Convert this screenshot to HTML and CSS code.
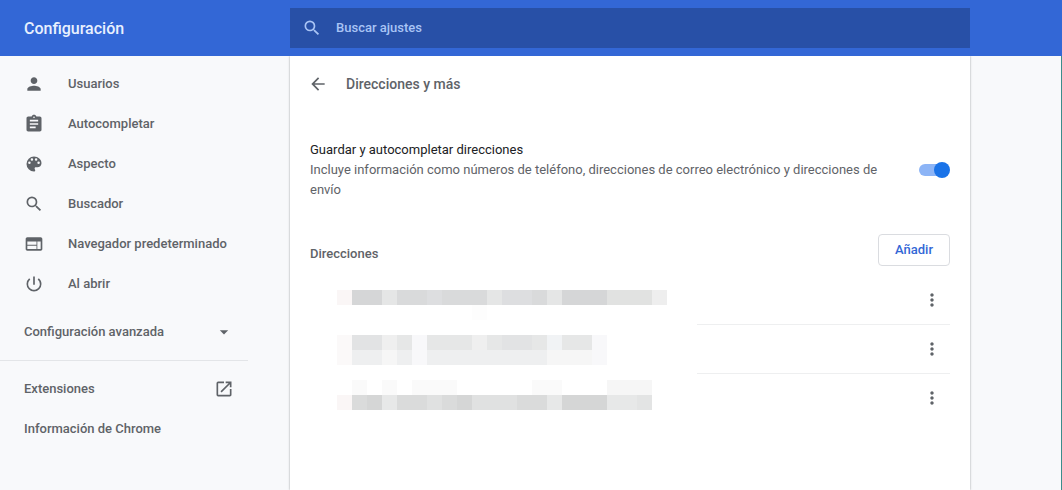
FILE: index.html
```html
<!DOCTYPE html>
<html lang="es">
<head>
    <meta charset="UTF-8">
    <meta name="viewport" content="width=device-width, initial-scale=1.0">
    <title>Configuración - Direcciones y más</title>
    <link rel="stylesheet" href="styles.css">
</head>
<body>

<header class="toolbar">
    <h1>Configuración</h1>
    <label class="search">
        <svg class="icon" viewBox="0 0 24 24" aria-hidden="true"><path d="M15.5 14h-.79l-.28-.27A6.47 6.47 0 0 0 16 9.5 6.5 6.5 0 1 0 9.5 16c1.61 0 3.09-.59 4.23-1.57l.27.28v.79l5 4.99L20.49 19l-4.99-5zm-6 0C7.01 14 5 11.99 5 9.5S7.01 5 9.5 5 14 7.01 14 9.5 11.99 14 9.5 14z"/></svg>
        <input type="search" placeholder="Buscar ajustes" aria-label="Buscar ajustes">
    </label>
</header>

<div class="layout">
    <nav class="menu">
        <a href="#usuarios">
            <svg class="icon" viewBox="0 0 24 24" aria-hidden="true"><path d="M12 12c2.21 0 4-1.79 4-4s-1.79-4-4-4-4 1.79-4 4 1.79 4 4 4zm0 2c-2.67 0-8 1.34-8 4v2h16v-2c0-2.66-5.33-4-8-4z"/></svg>
            Usuarios
        </a>
        <a href="#autocompletar">
            <svg class="icon" viewBox="0 0 24 24" aria-hidden="true"><path d="M19 3h-4.18C14.4 1.84 13.3 1 12 1c-1.3 0-2.4.84-2.82 2H5c-1.1 0-2 .9-2 2v14c0 1.1.9 2 2 2h14c1.1 0 2-.9 2-2V5c0-1.1-.9-2-2-2zm-7 0c.55 0 1 .45 1 1s-.45 1-1 1-1-.45-1-1 .45-1 1-1zm2 14H7v-2h7v2zm3-4H7v-2h10v2zm0-4H7V7h10v2z"/></svg>
            Autocompletar
        </a>
        <a href="#aspecto">
            <svg class="icon" viewBox="0 0 24 24" aria-hidden="true"><path d="M12 3a9 9 0 0 0 0 18c.83 0 1.5-.67 1.5-1.5 0-.39-.15-.74-.39-1.01-.23-.26-.38-.61-.38-.99 0-.83.67-1.5 1.5-1.5H16c2.76 0 5-2.24 5-5 0-4.42-4.03-8-9-8zm-5.5 9a1.5 1.5 0 1 1 0-3 1.5 1.5 0 0 1 0 3zm3-4a1.5 1.5 0 1 1 0-3 1.5 1.5 0 0 1 0 3zm5 0a1.5 1.5 0 1 1 0-3 1.5 1.5 0 0 1 0 3zm3 4a1.5 1.5 0 1 1 0-3 1.5 1.5 0 0 1 0 3z"/></svg>
            Aspecto
        </a>
        <a href="#buscador">
            <svg class="icon" viewBox="0 0 24 24" aria-hidden="true"><path d="M15.5 14h-.79l-.28-.27A6.47 6.47 0 0 0 16 9.5 6.5 6.5 0 1 0 9.5 16c1.61 0 3.09-.59 4.23-1.57l.27.28v.79l5 4.99L20.49 19l-4.99-5zm-6 0C7.01 14 5 11.99 5 9.5S7.01 5 9.5 5 14 7.01 14 9.5 11.99 14 9.5 14z"/></svg>
            Buscador
        </a>
        <a href="#navegador">
            <svg class="icon" viewBox="0 0 24 24" aria-hidden="true"><path d="M20 4H4c-1.1 0-1.99.9-1.99 2L2 18c0 1.1.9 2 2 2h16c1.1 0 2-.9 2-2V6c0-1.1-.9-2-2-2zm-5 14H4v-4h11v4zm0-5H4V9h11v4zm5 5h-4V9h4v9z"/></svg>
            Navegador predeterminado
        </a>
        <a href="#inicio">
            <svg class="icon" viewBox="0 0 24 24" aria-hidden="true"><path d="M13 3h-2v10h2V3zm4.83 2.17l-1.42 1.42A6.92 6.92 0 0 1 19 12c0 3.87-3.13 7-7 7s-7-3.13-7-7c0-2.19 1.01-4.14 2.58-5.42L6.17 5.17A8.93 8.93 0 0 0 3 12a9 9 0 0 0 18 0c0-2.74-1.23-5.18-3.17-6.83z"/></svg>
            Al abrir
        </a>
        <button type="button" class="advanced">
            Configuración avanzada
            <svg class="icon" viewBox="0 0 24 24" aria-hidden="true"><path d="M7 10l5 5 5-5z"/></svg>
        </button>
        <hr>
        <a href="#extensiones" class="external">
            Extensiones
            <svg class="icon" viewBox="0 0 24 24" aria-hidden="true"><path d="M19 19H5V5h7V3H5a2 2 0 0 0-2 2v14a2 2 0 0 0 2 2h14c1.1 0 2-.9 2-2v-7h-2v7zM14 3v2h3.59l-9.83 9.83 1.41 1.41L19 6.41V10h2V3h-7z"/></svg>
        </a>
        <a href="#informacion">Información de Chrome</a>
    </nav>

    <main class="page">
        <div class="page-title">
            <button type="button" class="icon-button" aria-label="Atrás">
                <svg class="icon" viewBox="0 0 24 24" aria-hidden="true"><path d="M20 11H7.83l5.59-5.59L12 4l-8 8 8 8 1.41-1.41L7.83 13H20v-2z"/></svg>
            </button>
            <h2>Direcciones y más</h2>
        </div>

        <div class="setting">
            <label for="save-addresses">
                <span class="setting-name">Guardar y autocompletar direcciones</span>
                <span class="setting-info">Incluye información como números de teléfono, direcciones de correo electrónico y direcciones de envío</span>
            </label>
            <input type="checkbox" class="toggle" id="save-addresses" checked>
        </div>

        <div class="list-header">
            <h3>Direcciones</h3>
            <button type="button" class="add-button">Añadir</button>
        </div>

        <!-- Addresses are pixelated, only the menus can be used -->
        <ul class="addresses">
            <li>
                <svg class="pixelated" viewBox="0 0 387 48" aria-hidden="true">
                    <path fill="#faf6f6" d="M27 14h15v15H27z"/>
                    <path fill="#d9dadb" d="M42 14h315v15H42z"/>
                    <path fill="#d5d6d7" d="M42 14h30v15H42zM252 14h45v15h-45z"/>
                    <path fill="#e5e6e6" d="M72 14h15v15H72zM177 14h15v15h-15zM237 14h15v15h-15z"/>
                    <path fill="#dddee0" d="M117 14h15v15h-15zM192 14h30v15h-30z"/>
                    <path fill="#e1e2e1" d="M297 14h45v15h-45z"/>
                    <path fill="#eeeeee" d="M342 14h15v15h-15z"/>
                    <path fill="#fdfdfd" d="M162 29h15v15h-15z"/>
                </svg>
                <div class="actions">
                    <button type="button" class="icon-button" aria-label="Más acciones">
                        <svg class="icon" viewBox="0 0 24 24" aria-hidden="true"><path d="M12 8c1.1 0 2-.9 2-2s-.9-2-2-2-2 .9-2 2 .9 2 2 2zm0 2c-1.1 0-2 .9-2 2s.9 2 2 2 2-.9 2-2-.9-2-2-2zm0 6c-1.1 0-2 .9-2 2s.9 2 2 2 2-.9 2-2-.9-2-2-2z"/></svg>
                    </button>
                </div>
            </li>
            <li>
                <svg class="pixelated" viewBox="0 0 387 48" aria-hidden="true">
                    <path fill="#fbf9f9" d="M27 10h15v30H27z"/>
                    <path fill="#e6e7e7" d="M42 10h240v15H42z"/>
                    <path fill="#e2e3e4" d="M42 10h30v15H42zM192 10h30v15h-30z"/>
                    <path fill="#efefef" d="M72 10h15v15H72zM162 10h15v15h-15z"/>
                    <path fill="#f8f8fa" d="M102 10h15v30h-15zM282 10h15v30h-15z"/>
                    <path fill="#f1f3f5" d="M237 10h15v15h-15z"/>
                    <path fill="#eeeff0" d="M42 25h30v15H42zM87 25h15v15H87zM117 25h120v15H117z"/>
                    <path fill="#f6f6f6" d="M72 25h15v15H72zM237 25h45v15h-45z"/>
                </svg>
                <div class="actions">
                    <button type="button" class="icon-button" aria-label="Más acciones">
                        <svg class="icon" viewBox="0 0 24 24" aria-hidden="true"><path d="M12 8c1.1 0 2-.9 2-2s-.9-2-2-2-2 .9-2 2 .9 2 2 2zm0 2c-1.1 0-2 .9-2 2s.9 2 2 2 2-.9 2-2-.9-2-2-2zm0 6c-1.1 0-2 .9-2 2s.9 2 2 2 2-.9 2-2-.9-2-2-2z"/></svg>
                    </button>
                </div>
            </li>
            <li>
                <svg class="pixelated" viewBox="0 0 387 48" aria-hidden="true">
                    <path fill="#fafafa" d="M42 6h15v15H42zM72 6h15v15H72zM102 6h45v15h-45zM222 6h30v15h-30z"/>
                    <path fill="#f6f6f6" d="M297 6h45v15h-45z"/>
                    <path fill="#faf6f6" d="M27 21h15v15H27z"/>
                    <path fill="#dadbdb" d="M42 21h300v15H42z"/>
                    <path fill="#d5d6d6" d="M57 21h15v15H57zM147 21h15v15h-15zM252 21h45v15h-45z"/>
                    <path fill="#e7e8e8" d="M72 21h15v15H72zM237 21h15v15h-15zM297 21h30v15h-30z"/>
                    <path fill="#e0e1e1" d="M117 21h15v15h-15zM162 21h45v15h-45z"/>
                    <path fill="#e3e4e4" d="M327 21h15v15h-15z"/>
                </svg>
                <div class="actions">
                    <button type="button" class="icon-button" aria-label="Más acciones">
                        <svg class="icon" viewBox="0 0 24 24" aria-hidden="true"><path d="M12 8c1.1 0 2-.9 2-2s-.9-2-2-2-2 .9-2 2 .9 2 2 2zm0 2c-1.1 0-2 .9-2 2s.9 2 2 2 2-.9 2-2-.9-2-2-2zm0 6c-1.1 0-2 .9-2 2s.9 2 2 2 2-.9 2-2-.9-2-2-2z"/></svg>
                    </button>
                </div>
            </li>
        </ul>
    </main>
</div>

</body>
</html>
```
FILE: styles.css
```css
* {
    box-sizing: border-box;
}

body {
    display: flex;
    flex-direction: column;
    min-height: 100vh;
    margin: 0;
    background-color: #f8f9fb;
    color: #5f6368;
    font-family: Roboto, "Liberation Sans", sans-serif;
    font-size: 13px;
    line-height: 20px;
}

h1, h2, h3 {
    margin: 0;
    font-weight: 500;
}

button, input {
    font: inherit;
    color: inherit;
}

button {
    padding: 0;
    border: none;
    background: none;
    cursor: pointer;
}

.icon {
    display: block;
    flex: none;
    width: 20px;
    height: 20px;
    fill: currentColor;
}

/* Header and content share the same columns */
.toolbar,
.layout {
    display: grid;
    grid-template-columns: 290px minmax(0, 680px) 1fr;
}

.toolbar {
    align-items: center;
    height: 56px;
    background-color: #3367d6;
    color: #e8f0fe;
}

.toolbar h1 {
    padding: 2px 0 0 24px;
    font-size: 16px;
}

.search {
    display: flex;
    align-items: center;
    gap: 14px;
    height: 40px;
    padding: 0 12px;
    background-color: #2850a7;
    color: #a9c4f5;
}

.search input {
    flex: 1;
    min-width: 0;
    padding: 0;
    border: none;
    outline: none;
    background: none;
    font-weight: 500;
}

.search input::placeholder {
    color: #a9c4f5;
}

.layout {
    flex: 1;
    border-right: 1px solid #3c8c8c;
}

/* Side menu */
.menu {
    width: 248px;
    padding: 8px 0;
    font-weight: 500;
}

.menu a,
.advanced {
    display: flex;
    align-items: center;
    gap: 24px;
    height: 40px;
    padding: 0 14px 0 24px;
    color: #5f6368;
    text-decoration: none;
    white-space: nowrap;
}

.menu .external,
.advanced {
    justify-content: space-between;
}

.advanced {
    width: 100%;
    margin-top: 8px;
}

.menu hr {
    height: 1px;
    margin: 8px 0;
    border: none;
    background-color: #e3e5e8;
}

/* Settings page */
.page {
    padding: 0 20px;
    background-color: #fff;
    box-shadow: 0 0 2px rgba(60, 64, 67, 0.5);
    clip-path: inset(0 -4px);
}

.page-title {
    display: flex;
    align-items: center;
    height: 56px;
}

.page-title h2 {
    font-size: 14px;
}

.icon-button {
    display: flex;
    align-items: center;
    justify-content: center;
    width: 36px;
    height: 36px;
}

.page-title .icon-button {
    margin-left: -10px;
    margin-right: 10px;
}

.setting {
    display: flex;
    align-items: center;
    justify-content: space-between;
    gap: 24px;
    margin-top: 28px;
}

.setting-name,
.setting-info {
    display: block;
}

.setting-name {
    color: #202124;
}

.toggle {
    position: relative;
    flex: none;
    width: 31px;
    height: 16px;
    margin: 0;
    appearance: none;
    cursor: pointer;
}

.toggle::before,
.toggle::after {
    content: "";
    position: absolute;
}

.toggle::before {
    inset: 2px 3px 2px 0;
    border-radius: 6px;
    background-color: #bdc1c6;
}

.toggle::after {
    left: 0;
    width: 16px;
    height: 16px;
    border-radius: 50%;
    background-color: #fff;
}

.toggle:checked::before {
    background-color: #8cb4f6;
}

.toggle:checked::after {
    left: auto;
    right: 0;
    background-color: #1a73e8;
}

.list-header {
    display: flex;
    align-items: center;
    justify-content: space-between;
    margin-top: 34px;
}

.list-header h3 {
    margin-top: 8px;
    font-size: 13px;
}

.add-button {
    height: 32px;
    padding: 0 16px;
    border: 1px solid #dadce0;
    border-radius: 4px;
    color: #3367d6;
    font-weight: 500;
}

.addresses {
    margin: 10px 0 0;
    padding: 0;
    list-style: none;
}

.addresses li {
    display: flex;
    height: 49px;
}

.pixelated {
    flex: 0 1 387px;
    min-width: 0;
    height: 48px;
}

.actions {
    display: flex;
    flex: 1;
    align-items: center;
    justify-content: flex-end;
    border-bottom: 1px solid #eeeff0;
}

.addresses li:last-child .actions {
    border-bottom-color: transparent;
}
```
